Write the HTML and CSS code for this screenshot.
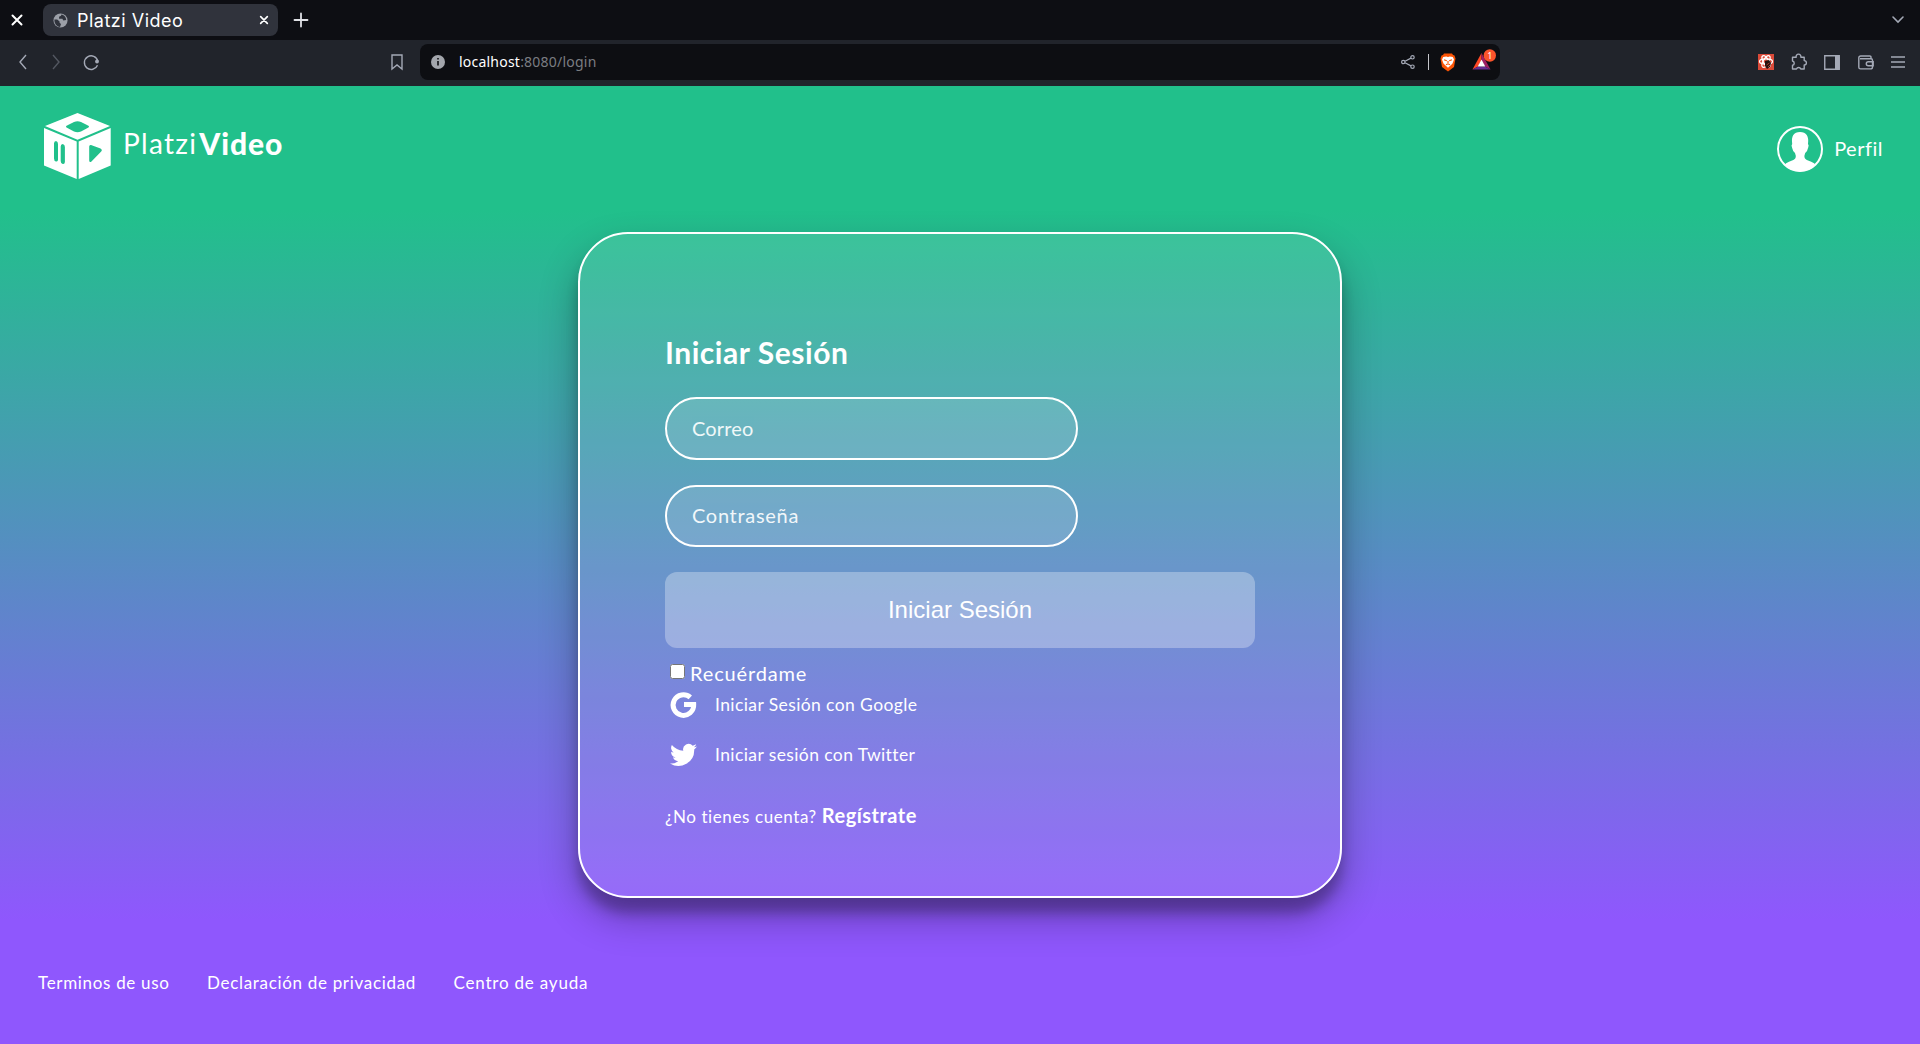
FILE: index.html
```html
<!DOCTYPE html>
<html lang="es">
<head>
<meta charset="utf-8">
<title>Platzi Video</title>
<link rel="stylesheet" href="styles.css">
</head>
<body>
<div class="tabbar">
  <svg class="win-close" width="12" height="12" viewBox="0 0 12 12"><path d="M1.5 1.5l9 9M10.500 1.500l-9 9"/></svg>
  <div class="tab">
    <svg width="15" height="15" viewBox="0 0 16 16"><circle cx="8" cy="8" r="7.500" fill="#9ca0a8"/><path d="M1.500 7h3l2.500 2v1.500l1.500 1.300-1 3.200C4 14.500 1.300 11.500 1.500 7zM9 1.500L8.500 3 6.500 4v2h3.500l1 2 3-.5C14.200 4.500 12 2 9 1.500z" fill="#30333c"/></svg>
    <span class="tab-title">Platzi Video</span>
    <svg class="tab-close" width="10" height="10" viewBox="0 0 12 12"><path d="M2 2l8 8M10 2l-8 8"/></svg>
  </div>
  <svg class="plus" width="14" height="14" viewBox="0 0 14 14"><path d="M7 .5v13M.5 7h13"/></svg>
  <svg class="chevron" width="12" height="8" viewBox="0 0 12 8"><path d="M1 1l5 5 5-5"/></svg>
</div>
<div class="toolbar">
  <div class="nav">
    <svg width="10" height="16" viewBox="0 0 10 16"><path d="M8 1L2 8l6 7"/></svg>
    <svg class="dim" width="10" height="16" viewBox="0 0 10 16"><path d="M2 1l6 7-6 7"/></svg>
    <svg width="17" height="17" viewBox="0 0 17 17"><path d="M14.500 11.200A6.800 6.800 0 1 1 14.800 7"/><circle cx="14" cy="7.500" r="1.900" fill="#a4a9b6" stroke="none"/></svg>
  </div>
  <svg class="bookmark" width="12" height="16" viewBox="0 0 12 16"><path d="M1 1h10v14l-5-4-5 4z"/></svg>
  <div class="address">
    <svg class="info" width="14" height="14" viewBox="0 0 14 14"><circle cx="7" cy="7" r="7" fill="#a3a6ac"/><path d="M7 6v4.500M7 3v1.500" stroke="#0d0e12" stroke-width="1.600"/></svg>
    <span class="url"><b>localhost</b>:8080/login</span>
    <div class="address-icons">
      <svg width="14" height="14" viewBox="0 0 14 14"><circle cx="2.300" cy="7" r="1.700"/><circle cx="11.500" cy="2.300" r="1.700"/><circle cx="11.500" cy="11.700" r="1.700"/><path d="M4 6.200l6-3.100M4 7.800l6 3.100"/></svg>
      <i class="sep"></i>
      <svg class="lion" width="16" height="19" viewBox="0 0 16 19"><path d="M4 .5h8l1 1.500 1.500.5 1 3-1.500 8.500-6 4.500L2 14 .5 5.500l1-3L3 2z" fill="#fb5405"/><path d="M3.200 4l3-.5 1.800.5 1.800-.5 3 .5 1.200 2.500-1.500 4-1.700 1.700L8 14.800l-2.800-2.600-1.700-1.700L2 6.500z" fill="#fff"/><path d="M4 6.800l2.800 1M12 6.800l-2.800 1M6 11.800l2-1 2 1M8 8v2" stroke="#fb5405" stroke-width="1.100" fill="none"/></svg>
      <svg class="bat" width="24" height="22" viewBox="0 0 24 22"><path d="M9.500 5L.5 21.500l5.500-3 3.500-6z" fill="#ff4724"/><path d="M9.500 5l9 16.500-5.500-3-3.500-6z" fill="#9e1f63"/><path d="M.5 21.500h18l-5.500-3H6z" fill="#662d91"/><path d="M9.500 11.500L5.700 18.500h7.600z" fill="#fff"/><circle cx="17.800" cy="7.500" r="6.200" fill="#fb542b"/><text x="17.800" y="10.700" text-anchor="middle">1</text></svg>
    </div>
  </div>
  <div class="extensions">
    <svg width="16" height="16" viewBox="0 0 16 16"><path d="M0 0h16v16H0z" fill="#db4a39" stroke="none"/><g fill="none" stroke="#fff" stroke-width="1.200"><ellipse cx="8" cy="7.500" rx="6.500" ry="2.700"/><ellipse cx="8" cy="7.500" rx="6.500" ry="2.700" transform="rotate(60 8 7.500)"/><ellipse cx="8" cy="7.500" rx="6.500" ry="2.700" transform="rotate(120 8 7.500)"/></g><path d="M7 7l4-1 2 3-1 4-3 2-2-3z" fill="#24130f" stroke="none"/><path d="M8.500 11l3-2M10 13l2-2" stroke="#db4a39" stroke-width=".7"/></svg>
    <svg width="16" height="16" viewBox="0 0 16 16"><path stroke-linejoin="round" d="M1.500 3.200h3.700a2.400 2.400 0 1 1 4.600 0h3.400v3.400a2.200 2.200 0 0 1 0 4.400v4H9.800a2.300 2.300 0 0 0-4.300 0h-4v-3.700a2.200 2.200 0 0 0 0-4.300z"/></svg>
    <svg width="16" height="15" viewBox="0 0 16 15"><path d="M.75.75h14.500v13.500H.75z"/><path d="M11 1h4.500v13H11z" fill="#a4a9b6" stroke="none"/></svg>
    <svg width="16" height="15" viewBox="0 0 16 15"><path d="M13 3.500V2.200Q13 1 11.800 1H2.800Q.8 1 .8 3v9.200q0 1.700 1.700 1.700h10q2 0 2-2V5.200q0-1.500-1.500-1.500H2M15.200 6.700H10.300q-2 0-2 2t2 2h4.900z"/></svg>
    <svg width="14" height="12" viewBox="0 0 14 12"><path d="M0 1h14M0 6h14M0 11h14"/></svg>
  </div>
</div>
<div class="page">
  <header class="header">
    <div class="brand">
      <svg width="68" height="67" viewBox="0 0 68 67"><path fill="#fff" fill-rule="evenodd" d="M33.500 0L66 13 33.500 26.700 1 13zM30 9l-7 3.500q-2 1.200 0 2.300l7 3.600q3.500 1.600 7 0l7-3.600q2-1.100 0-2.300L37 9q-3.500-1.600-7 0zM0 15l32.700 13.400V66L0 52.500zM12 28q-2 0-2 2.500v15q0 2.500 2 3t2-2V31q0-2.500-2-3zm6.700 3q-2 0-2 2.500V48q0 2.500 2 3t2.200-2V34q0-2.500-2.200-3zM34.700 28.400L66.700 15v37.500L34.700 66zM47 32q-1.800-.3-1.800 1.500v14q.2 2.300 2 1.200l10-10.200q1.500-1.800-.7-3.100z"/></svg>
      <span class="word"><span class="platzi">Platzi</span><b>Video</b></span>
    </div>
    <div class="profile">
      <svg width="46" height="46" viewBox="0 0 46 46"><circle cx="23" cy="23" r="22" fill="none" stroke="#fff" stroke-width="2"/><path fill="#fff" d="M7.500 39q1-2 4.500-3.300 5.500-1.700 6.500-3.700.8-2-.5-5-2.200-1.500-3-5.500-1-2.200.2-3.500Q13.500 6 23 6t8 12q1.200 1.300.2 3.500-.8 4-3 5.500-1.300 3-.5 5 1 2 6.500 3.700 3.500 1.300 4.500 3.300Q32 45.500 23 45.500T7.500 39z"/></svg>
      <span>Perfil</span>
    </div>
  </header>
  <main class="main">
    <section class="card">
      <h2>Iniciar Sesión</h2>
      <input class="field" type="text" placeholder="Correo">
      <input class="field password" type="text" placeholder="Contraseña">
      <button class="submit">Iniciar Sesión</button>
      <label class="remember"><input type="checkbox"><span>Recuérdame</span></label>
      <div class="social">
        <svg width="27" height="27" viewBox="0 0 27 27"><path fill="none" stroke="#fff" stroke-width="5" d="M20.300 6.400A10.300 10.300 0 1 0 23.700 13.500H14"/></svg>
        <span class="google">Iniciar Sesión con Google</span>
      </div>
      <div class="social second">
        <svg width="27" height="24" viewBox="0 0 24 20"><path fill="#fff" d="M24 2.400a10 10 0 0 1-2.800.8A5 5 0 0 0 23.300.5a10 10 0 0 1-3.100 1.200A4.900 4.900 0 0 0 11.800 6.200 14 14 0 0 1 1.700 1.100 4.900 4.900 0 0 0 3.200 7.700 5 5 0 0 1 1 7.100a4.900 4.900 0 0 0 3.900 4.900 5 5 0 0 1-2.200.1 4.900 4.900 0 0 0 4.600 3.400A10 10 0 0 1 0 17.500 14 14 0 0 0 21.500 5 10 10 0 0 0 24 2.400z"/></svg>
        <span class="twitter">Iniciar sesión con Twitter</span>
      </div>
      <p class="register"><span class="ask">¿No tienes cuenta?</span> <b>Regístrate</b></p>
    </section>
  </main>
  <footer class="footer"><span>Terminos de uso</span><span>Declaración de privacidad</span><span class="help">Centro de ayuda</span></footer>
</div>
</body>
</html>
```
FILE: styles.css
```css
* { box-sizing: border-box; }
body { margin: 0; height: 1044px; display: flex; flex-direction: column; overflow: hidden; font-family: Lato, sans-serif; font-variant-ligatures: none; color: #fff; }
svg { display: block; flex: none; overflow: visible; }

.tabbar { height: 40px; background: #0d0e13; display: flex; align-items: center; padding: 0 16px 0 11px; }
.tabbar svg path { stroke-linecap: round; }
.win-close, .tab-close { stroke: #fff; stroke-width: 2; }
.tab { width: 235px; height: 32px; margin-left: 20px; padding: 0 9px 0 10px; border-radius: 8px; background: #30333c; display: flex; align-items: center; }
.tab-title { margin-left: 9px; padding-top: 1px; font: 18px/31px Inter, sans-serif; letter-spacing: .5px; }
.tab-close { margin-left: auto; }
.plus { margin-left: 16px; stroke: #dfe1e6; stroke-width: 1.8; }
.chevron { margin-left: auto; fill: none; stroke: #a4a9b6; stroke-width: 1.6; }

.toolbar { height: 46px; background: #21242b; display: flex; align-items: center; padding: 0 15px 2px 18px; }
.toolbar svg { stroke: #a4a9b6; stroke-width: 1.4; fill: none; }
.nav { display: flex; align-items: center; gap: 22.5px; width: 373px; }
.nav .dim { stroke: #535761; }
.address { margin-left: 17px; width: 1080px; height: 36px; border-radius: 8px; background: #0d0e12; display: flex; align-items: center; padding: 0 12px 0 11px; }
.toolbar .info, .toolbar .lion, .toolbar .bat { stroke: none; }
.url { margin-left: 14px; font: 14px/18px "Noto Sans", sans-serif; letter-spacing: .22px; color: #7b7d82; }
.url b { font-weight: 400; color: #fff; }
.address-icons { margin-left: auto; display: flex; align-items: center; }
.address-icons svg { stroke-width: 1.2; }
.sep { width: 1px; height: 16px; background: #c5c6ca; margin: 0 11px 0 13px; }
.bat { margin: -6px -8px 0 16px; }
.bat text { fill: #fff; font: 9px "Noto Sans", sans-serif; }
.extensions { margin-left: auto; display: flex; align-items: center; gap: 17.5px; }
.extensions svg:first-child { margin-right: -.5px; }

.page { flex: 1; display: flex; flex-direction: column; background: linear-gradient(#21c08b 0, #21c08b 124px, #8f57fd 834px); }
.header { height: 146px; padding: 27px 37px 0 44px; display: flex; justify-content: space-between; }
.brand { display: flex; height: 67px; }
.word { margin-left: 11px; padding-top: 13px; display: flex; font: 28px/34px Lato, sans-serif; }
.platzi { letter-spacing: 1.3px; }
.word b { margin-left: 2px; font-weight: 900; font-size: 30px; letter-spacing: .9px; }
.profile { display: flex; align-items: center; height: 46px; margin-top: 13px; gap: 11px; font-size: 20px; line-height: 24px; letter-spacing: .5px; }
.profile span { padding-bottom: 3px; }

.card { width: 764px; height: 666px; margin: 0 auto; padding: 96px 85px 0; border: 2px solid #fff; border-radius: 50px; background: rgba(255,255,255,.1); box-shadow: 0 19px 38px rgba(0,0,0,.3), 0 15px 12px rgba(0,0,0,.22); }
.card h2 { margin: 0 0 23px; font-size: 30px; line-height: 44px; letter-spacing: .55px; }
.field { display: block; width: 413px; height: 62.5px; margin-bottom: 25px; padding: 0 25px; border: 2px solid #fff; border-radius: 32px; background: rgba(255,255,255,.12); font: 20px Lato, sans-serif; letter-spacing: .15px; }
.password { padding-bottom: 2px; letter-spacing: .7px; }
.field::placeholder { color: #fff; opacity: .9; }
.submit { display: block; width: 590px; height: 76px; border: 0; border-radius: 12px; color: #fff; background: rgba(255,255,255,.3); font: 24px "Liberation Sans", sans-serif; }
.remember { height: 43px; display: flex; align-items: flex-start; padding-top: 12px; font-size: 20px; line-height: 26px; letter-spacing: .85px; }
.remember input { width: 15px; height: 15px; margin: 4px 5px 0; }
.social { height: 27px; display: flex; align-items: center; gap: 18px; padding-left: 5px; font-size: 17.5px; letter-spacing: .4px; }
.social.second { margin-top: 23px; }
.register { margin: 33px 0 0; font-size: 17px; line-height: 28px; letter-spacing: .6px; }
.register b { font-size: 20px; letter-spacing: .5px; }

.footer { margin-top: auto; height: 76px; padding: 4px 38px; display: flex; gap: 37.5px; font-size: 17px; line-height: 21px; letter-spacing: .68px; }
.help { letter-spacing: .8px; }
```
